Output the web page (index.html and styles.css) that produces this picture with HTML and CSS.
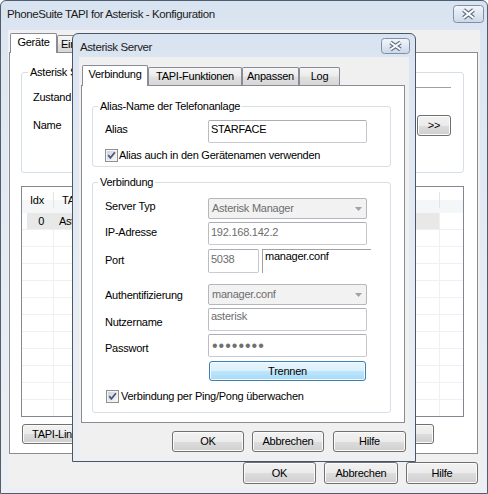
FILE: index.html
```html
<!DOCTYPE html>
<html>
<head>
<meta charset="utf-8">
<link rel="stylesheet" href="styles.css">
</head>
<body>
<div class="win main">
  <div class="titlebar">
    <span class="title">PhoneSuite TAPI for Asterisk - Konfiguration</span>
    <svg class="close" width="31" height="18" viewBox="0 0 31 18">
      <defs><linearGradient id="cg1" x1="0" y1="0" x2="0" y2="1"><stop offset="0" stop-color="#f3f6fb"/><stop offset="0.5" stop-color="#dfe7f2"/><stop offset="1" stop-color="#ccd8e8"/></linearGradient></defs>
      <rect x="0.5" y="0.5" width="30" height="17" rx="3" fill="url(#cg1)" stroke="#7f8fa5"/>
      <path d="M10.5 5 L20.5 13 M20.5 5 L10.5 13" stroke="#5f6d80" stroke-width="4.2" fill="none"/>
      <path d="M10.5 5 L20.5 13 M20.5 5 L10.5 13" stroke="#ffffff" stroke-width="2.2" fill="none"/>
    </svg>
  </div>
  <div class="client">
    <div class="tabstrip">
      <div class="tab sel t-ger">Geräte</div>
      <div class="tab t-ein">Einstellungen</div>
    </div>
    <div class="panel mpanel">
      <fieldset class="grp g-srv">
        <legend>Asterisk Server</legend>
        <div class="row r-state"><span class="lbl w84">Zustand</span><div class="state"></div></div>
        <div class="row r-name"><span class="lbl w84">Name</span><div class="btn more">&gt;&gt;</div></div>
      </fieldset>
      <div class="list">
        <div class="lhead"><div class="c c0">Idx</div><div class="c c1">TAPI-Linie</div><div class="c c2"></div></div>
        <div class="lrow on"><div class="c c0">0</div><div class="c c1">Asterisk</div><div class="c c2"></div></div>
        <div class="lrow"><div class="c c0"></div><div class="c c1"></div><div class="c c2"></div></div>
        <div class="lrow"><div class="c c0"></div><div class="c c1"></div><div class="c c2"></div></div>
        <div class="lrow"><div class="c c0"></div><div class="c c1"></div><div class="c c2"></div></div>
        <div class="lrow"><div class="c c0"></div><div class="c c1"></div><div class="c c2"></div></div>
        <div class="lrow"><div class="c c0"></div><div class="c c1"></div><div class="c c2"></div></div>
        <div class="lrow"><div class="c c0"></div><div class="c c1"></div><div class="c c2"></div></div>
        <div class="lrow"><div class="c c0"></div><div class="c c1"></div><div class="c c2"></div></div>
        <div class="lrow"><div class="c c0"></div><div class="c c1"></div><div class="c c2"></div></div>
        <div class="lrow"><div class="c c0"></div><div class="c c1"></div><div class="c c2"></div></div>
        <div class="lrow"><div class="c c0"></div><div class="c c1"></div><div class="c c2"></div></div>
        <div class="lrow"><div class="c c0"></div><div class="c c1"></div><div class="c c2"></div></div>
      </div>
      <div class="pbtns"><div class="btn tl">TAPI-Linien verwalten</div><div class="btn tr">Testen</div></div>
    </div>
    <div class="mbtns"><div class="btn b-ok">OK</div><div class="btn b-ab">Abbrechen</div><div class="btn b-hi">Hilfe</div></div>
  </div>
</div>

<div class="win dlg">
  <div class="titlebar">
    <span class="title">Asterisk Server</span>
    <svg class="close" width="29" height="16" viewBox="0 0 29 16">
      <defs><linearGradient id="cg2" x1="0" y1="0" x2="0" y2="1"><stop offset="0" stop-color="#f3f6fb"/><stop offset="0.5" stop-color="#dfe7f2"/><stop offset="1" stop-color="#ccd8e8"/></linearGradient></defs>
      <rect x="0.5" y="0.5" width="28" height="15" rx="3" fill="url(#cg2)" stroke="#7f8fa5"/>
      <path d="M9.5 4.5 L19.5 11.5 M19.5 4.5 L9.5 11.5" stroke="#5f6d80" stroke-width="4" fill="none"/>
      <path d="M9.5 4.5 L19.5 11.5 M19.5 4.5 L9.5 11.5" stroke="#ffffff" stroke-width="2" fill="none"/>
    </svg>
  </div>
  <div class="client">
    <div class="tabstrip">
      <div class="tab sel t-ver">Verbindung</div>
      <div class="tab t-tapi">TAPI-Funktionen</div>
      <div class="tab t-anp">Anpassen</div>
      <div class="tab t-log">Log</div>
    </div>
    <div class="panel dpanel">
      <fieldset class="grp g-alias">
        <legend>Alias-Name der Telefonanlage</legend>
        <div class="f h23"><span class="lbl m3">Alias</span><div class="tb w159 pt2 dark">STARFACE</div></div>
        <div class="chk ck-alias">
          <svg width="13" height="13" viewBox="0 0 13 13"><defs><linearGradient id="kb1" x1="0" y1="0" x2="1" y2="1"><stop offset="0" stop-color="#cfd3d8"/><stop offset="1" stop-color="#f7f7f7"/></linearGradient></defs><rect x=".5" y=".5" width="12" height="12" fill="#f4f4f4" stroke="#8e8f8f"/><rect x="2" y="2" width="9" height="9" fill="url(#kb1)"/><path d="M3.2 6.2 L5.4 8.8 L9.9 3.3" fill="none" stroke="#4a5a82" stroke-width="1.8"/></svg>
          <span>Alias auch in den Gerätenamen verwenden</span>
        </div>
      </fieldset>
      <fieldset class="grp g-conn">
        <legend>Verbindung</legend>
        <div class="f h21"><span class="lbl m2">Server Typ</span>
          <div class="cb"><span>Asterisk Manager</span><svg width="7" height="4" viewBox="0 0 7 4"><path d="M0 0 H7 L3.5 4 Z" fill="#a2a2a2"/></svg></div>
        </div>
        <div class="f h23 mt3"><span class="lbl m4">IP-Adresse</span><div class="tb w159 pt3">192.168.142.2</div></div>
        <div class="f h24 mt4"><span class="lbl m5">Port</span><div class="tb w51 pt3">5038</div><div class="conf">manager.conf</div></div>
        <div class="f h21 mt11"><span class="lbl m5">Authentifizierung</span>
          <div class="cb"><span>manager.conf</span><svg width="7" height="4" viewBox="0 0 7 4"><path d="M0 0 H7 L3.5 4 Z" fill="#a2a2a2"/></svg></div>
        </div>
        <div class="f h23 mt3"><span class="lbl m8">Nutzername</span><div class="tb w159 pt1">asterisk</div></div>
        <div class="f h23 mt3"><span class="lbl m8">Passwort</span><div class="tb w159 dots">••••••••</div></div>
        <div class="f mt4"><div class="btn hot trennen">Trennen</div></div>
        <div class="chk ck-ping">
          <svg width="13" height="13" viewBox="0 0 13 13"><defs><linearGradient id="kb2" x1="0" y1="0" x2="1" y2="1"><stop offset="0" stop-color="#cfd3d8"/><stop offset="1" stop-color="#f7f7f7"/></linearGradient></defs><rect x=".5" y=".5" width="12" height="12" fill="#f4f4f4" stroke="#8e8f8f"/><rect x="2" y="2" width="9" height="9" fill="url(#kb2)"/><path d="M3.2 6.2 L5.4 8.8 L9.9 3.3" fill="none" stroke="#4a5a82" stroke-width="1.8"/></svg>
          <span>Verbindung per Ping/Pong überwachen</span>
        </div>
      </fieldset>
    </div>
    <div class="dbtns"><div class="btn b-ok">OK</div><div class="btn b-ab">Abbrechen</div><div class="btn b-hi">Hilfe</div></div>
  </div>
</div>
</body>
</html>
```

FILE: styles.css
```css
* { box-sizing: border-box; }
html, body { margin: 0; padding: 0; }
body {
  width: 488px;
  height: 494px;
  overflow: hidden;
  position: relative;
  background: #ffffff;
  font-family: "Liberation Sans", Arial, sans-serif;
  font-size: 11px;
  line-height: 13px;
  letter-spacing: -0.25px;
  color: #000;
}

/* windows */
.win {
  display: flex;
  flex-direction: column;
  border: 1px solid #515d6c;
  border-radius: 6px 6px 0 0;
  background: linear-gradient(#d8e3f1 0, #dce5f1 28px, #e6ecf3 60%, #eceff3 100%);
}
.main { width: 488px; height: 494px; padding: 0 7px 6px 7px; }
.dlg {
  position: absolute;
  left: 72px;
  top: 33px;
  width: 344px;
  height: 429px;
  padding: 0 6px 5px 6px;
  border-color: #4b5766;
}

.titlebar { display: flex; justify-content: space-between; align-items: flex-start; flex: none; }
.main .titlebar { height: 29px; }
.dlg .titlebar { height: 23px; }
.title { font-size: 11.5px; line-height: 14px; letter-spacing: -0.4px; color: #1b1b1b; }
.main .title { margin: 6px 0 0 -1px; }
.dlg .title { margin: 6px 0 0 1px; }
.close { flex: none; display: block; }
.main .close { margin: 4px -4px 0 0; }
.dlg .close { margin: 4px -1px 0 0; }

.client { flex: 1; background: #f0f0f0; display: flex; flex-direction: column; min-height: 0; }

/* tabs */
.tabstrip { display: flex; align-items: flex-end; flex: none; }
.main .tabstrip { height: 22px; padding-left: 2px; }
.dlg .tabstrip { height: 28px; padding-left: 3px; }
.tab {
  flex: none;
  display: flex;
  align-items: center;
  justify-content: center;
  white-space: nowrap;
  overflow: hidden;
  border: 1px solid #898c95;
  border-bottom: none;
  border-radius: 2px 2px 0 0;
  background: linear-gradient(#f6f6f6, #ececec 45%, #e0e0e0 55%, #d7d7d7);
  height: 18px;
}
.tab.sel { background: #fff; margin-bottom: -1px; position: relative; z-index: 1; }
.main .tab { height: 17px; }
.main .tab.sel { height: 20px; padding-bottom: 2px; }
.dlg .tab.sel { height: 21px; padding-bottom: 3px; }
.t-ger { width: 47px; }
.tab.t-ein { width: 80px; justify-content: flex-start; padding-left: 3px; }
.t-ver { width: 66px; }
.t-tapi { width: 94px; }
.t-anp { width: 57px; }
.t-log { width: 41px; }

.panel { border: 1px solid #898c95; background: #fff; display: flex; flex-direction: column; flex: none; }
.mpanel { margin-left: 1px; width: 469px; height: 402px; }
.dpanel { margin-left: 2px; width: 324px; height: 338px; }

/* group boxes */
.grp { border: 1px solid #d5dfe5; border-radius: 3px; margin: 0; padding: 0; min-width: 0; flex: none; }
.grp legend { padding: 0 2px; line-height: 15px; }
.g-srv { margin: 12px 13px 0 11px; padding: 7px 12px 36px 11px; }
.g-srv legend { margin-left: -5px; }
.g-alias { margin: 13px 0 0 10px; width: 299px; padding: 6px 0 4px 12px; }
.g-conn { margin: 8px 0 0 10px; width: 299px; padding: 8px 0 9px 12px; }
.g-alias legend, .g-conn legend { margin-left: -7px; }

.row { display: flex; align-items: center; }
.r-state { height: 20px; }
.state { flex: 1; align-self: stretch; border-top: 1px solid #a0a0a0; }
.r-name { height: 21px; margin-top: 8px; }
.lbl { flex: none; white-space: nowrap; }
.w84 { width: 84px; }

/* list view */
.list { margin: 13px 13px 0 11px; height: 231px; border: 1px solid #828790; overflow: hidden; flex: none; }
.lhead, .lrow { display: flex; }
.lhead { height: 26px; background: linear-gradient(#ffffff 50%, #f5f6f7 50%); }
.lrow { height: 17px; border-bottom: 1px solid #f0f0f0; }
.c { flex: none; display: flex; align-items: center; overflow: hidden; white-space: nowrap; }
.c0 { width: 32px; }
.c1 { width: 386px; }
.c2 { flex: 1; }
.lhead .c0, .lhead .c1 { background: linear-gradient(#e3e4e6, #e3e4e6) no-repeat right center / 1px 16px; padding-left: 8px; }
.lrow .c0, .lrow .c1 { border-right: 1px solid #f0f0f0; }
.lrow .c0 { justify-content: flex-end; padding-right: 9px; }
.lrow .c1 { padding-left: 5px; }
.lrow.on .c0 { background: linear-gradient(90deg, transparent 5px, #e8e8e8 5px); border-right-color: #e8e8e8; }
.lrow.on .c1 { background: #e8e8e8; }

.pbtns { display: flex; margin: 7px 43px 0 12px; height: 20px; flex: none; }

/* buttons */
.btn {
  flex: none;
  display: flex;
  align-items: center;
  justify-content: center;
  white-space: nowrap;
  border: 1px solid #707070;
  border-radius: 3px;
  background: linear-gradient(#f2f2f2 0, #ebebeb 50%, #dddddd 50%, #cfcfcf 100%);
  box-shadow: inset 0 0 0 1px #fbfbfb;
}
.btn.hot {
  border-color: #3c7fb1;
  background: linear-gradient(#eaf6fd 0, #d9f0fc 50%, #bee6fd 50%, #a7d9f5 100%);
  box-shadow: inset 0 0 0 1px #f4fafe;
}
.btn.more { width: 34px; height: 21px; margin-left: auto; }
.btn.tl { width: 140px; justify-content: flex-start; padding-left: 9px; }
.btn.tr { width: 90px; margin-left: auto; }

.mbtns { display: flex; justify-content: flex-end; margin-top: 8px; padding-right: 2px; flex: none; }
.mbtns .btn { height: 22px; }
.mbtns .b-ok { width: 73px; }
.mbtns .b-ab { width: 74px; margin-left: 8px; }
.mbtns .b-hi { width: 72px; margin-left: 8px; }

.dbtns { display: flex; justify-content: flex-end; margin-top: 8px; padding-right: 3px; flex: none; }
.dbtns .btn { height: 21px; }
.dbtns .b-ok { width: 72px; }
.dbtns .b-ab { width: 72px; margin-left: 8px; }
.dbtns .b-hi { width: 73px; margin-left: 9px; }

/* form rows */
.f { display: flex; align-items: flex-start; }
.f .lbl { width: 103px; }
.h21 { height: 21px; }
.h23 { height: 23px; }
.h24 { height: 24px; }
.mt3 { margin-top: 3px; }
.mt4 { margin-top: 4px; }
.mt11 { margin-top: 11px; }
.m2 { margin-top: 2px; }
.m3 { margin-top: 3px; }
.m4 { margin-top: 4px; }
.m5 { margin-top: 5px; }
.m8 { margin-top: 8px; }

.tb {
  height: 100%;
  border: 1px solid;
  border-color: #abadb3 #c3c6cc #c8ccd2 #b9bcc2;
  border-radius: 2px;
  background: #fff;
  padding-left: 2px;
  color: #6d6d6d;
  white-space: nowrap;
}
.tb.dark { color: #000; }
.w159 { width: 159px; }
.w51 { width: 51px; }
.pt1 { padding-top: 1px; }
.pt2 { padding-top: 2px; }
.pt3 { padding-top: 3px; }
.dots { font-size: 16px; letter-spacing: 1px; line-height: 19px; padding-left: 3px; padding-top: 1px; color: #707070; }

.conf {
  width: 109px;
  height: 24px;
  margin-left: 3px;
  border-top: 1px solid #a0a0a0;
  border-left: 1px solid #a0a0a0;
  padding-left: 2px;
  white-space: nowrap;
}

.cb {
  width: 159px;
  height: 21px;
  border: 1px solid #b4b7bb;
  border-radius: 2px;
  background: #f2f2f2;
  color: #6d6d6d;
  display: flex;
  align-items: center;
  justify-content: space-between;
  padding: 0 4px 0 3px;
  white-space: nowrap;
}
.cb svg { display: block; }

.btn.trennen { width: 157px; height: 20px; margin-left: 104px; }

.chk { display: flex; align-items: center; height: 13px; white-space: nowrap; }
.chk svg { flex: none; display: block; }
.ck-alias { margin-top: 6px; }
.ck-alias span { margin-left: 1px; }
.ck-ping { margin-top: 9px; margin-left: 1px; }
.ck-ping span { margin-left: 2px; }
```
